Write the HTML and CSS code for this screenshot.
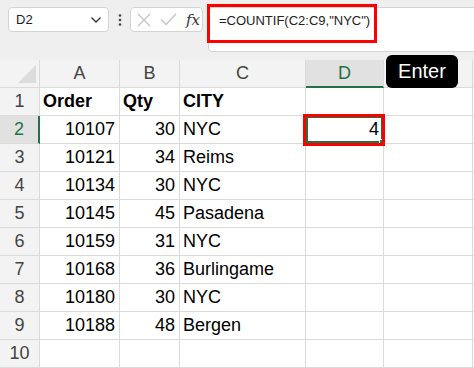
FILE: index.html
```html
<!DOCTYPE html>
<html lang="en">
<head>
  <meta charset="UTF-8">
  <title>COUNTIF</title>
  <link rel="stylesheet" href="styles.css">
</head>
<body>
  <div class="toolbar">
    <div class="namebox">
      <span>D2</span>
      <svg width="12" height="8" viewBox="0 0 12 8"><path d="M1.5 1.5 L6 6 L10.5 1.5" fill="none" stroke="#333" stroke-width="1.3"/></svg>
    </div>
    <div class="dots">
      <svg width="4" height="12" viewBox="0 0 4 12"><circle cx="2" cy="1.5" r="1.3" fill="#444"/><circle cx="2" cy="6" r="1.3" fill="#444"/><circle cx="2" cy="10.5" r="1.3" fill="#444"/></svg>
    </div>
    <div class="fxbox">
      <svg width="14" height="14" viewBox="0 0 14 14"><path d="M1 1 L13 13 M13 1 L1 13" stroke="#c4c4c4" stroke-width="1.3"/></svg>
      <svg width="17" height="13" viewBox="0 0 17 13"><path d="M1 6.5 L6 11.5 L16 1" fill="none" stroke="#c4c4c4" stroke-width="1.3"/></svg>
      <span class="fx">fx</span>
    </div>
    <div class="formula">=COUNTIF(C2:C9,"NYC")</div>
  </div>

  <div class="sheet">
    <div class="hd corner"><span class="tri"></span></div>
    <div class="hd">A</div>
    <div class="hd">B</div>
    <div class="hd">C</div>
    <div class="hd sel-col">D</div>
    <div class="hd"></div>
    <div class="hd last"></div>

    <div class="rh">1</div>
    <div class="c b">Order</div>
    <div class="c b">Qty</div>
    <div class="c b">CITY</div>
    <div class="c"></div><div class="c"></div><div class="c last"></div>

    <div class="rh sel-row">2</div>
    <div class="c n">10107</div><div class="c n">30</div><div class="c">NYC</div>
    <div class="c n active">4<span class="handle"></span></div><div class="c"></div><div class="c last"></div>

    <div class="rh">3</div>
    <div class="c n">10121</div><div class="c n">34</div><div class="c">Reims</div>
    <div class="c"></div><div class="c"></div><div class="c last"></div>

    <div class="rh">4</div>
    <div class="c n">10134</div><div class="c n">30</div><div class="c">NYC</div>
    <div class="c"></div><div class="c"></div><div class="c last"></div>

    <div class="rh">5</div>
    <div class="c n">10145</div><div class="c n">45</div><div class="c">Pasadena</div>
    <div class="c"></div><div class="c"></div><div class="c last"></div>

    <div class="rh">6</div>
    <div class="c n">10159</div><div class="c n">31</div><div class="c">NYC</div>
    <div class="c"></div><div class="c"></div><div class="c last"></div>

    <div class="rh">7</div>
    <div class="c n">10168</div><div class="c n">36</div><div class="c">Burlingame</div>
    <div class="c"></div><div class="c"></div><div class="c last"></div>

    <div class="rh">8</div>
    <div class="c n">10180</div><div class="c n">30</div><div class="c">NYC</div>
    <div class="c"></div><div class="c"></div><div class="c last"></div>

    <div class="rh">9</div>
    <div class="c n">10188</div><div class="c n">48</div><div class="c">Bergen</div>
    <div class="c"></div><div class="c"></div><div class="c last"></div>

    <div class="rh">10</div>
    <div class="c"></div><div class="c"></div><div class="c"></div>
    <div class="c"></div><div class="c"></div><div class="c last"></div>
  </div>

  <div class="mark mark-formula"></div>
  <div class="mark mark-cell"></div>
  <div class="badge">Enter</div>
</body>
</html>
```

FILE: styles.css
```css
body {
  margin: 0;
  background-color: #fff;
  font-family: "Liberation Sans", Arial, sans-serif;
  overflow: hidden;
  position: relative;
  height: 368px;
}

.toolbar {
  height: 60px;
  box-sizing: border-box;
  background-color: #efefef;
  display: flex;
  align-items: flex-start;
  padding: 7px 0 0 8px;
}

.namebox {
  width: 101px;
  height: 25px;
  box-sizing: border-box;
  background-color: #fff;
  border: 1px solid #d4d4d4;
  border-radius: 4px;
  display: flex;
  align-items: center;
  justify-content: space-between;
  padding: 0 6px 0 7px;
  font-size: 13px;
  color: #222;
}

.dots {
  width: 21px;
  height: 25px;
  display: flex;
  align-items: center;
  justify-content: center;
}

.fxbox {
  width: 73px;
  height: 25px;
  box-sizing: border-box;
  background-color: #fff;
  border: 1px solid #d4d4d4;
  border-radius: 4px;
  display: flex;
  align-items: center;
  gap: 9px;
  padding-left: 6px;
}

.fx {
  font-family: "DejaVu Serif", "Liberation Serif", serif;
  font-style: italic;
  font-size: 15px;
  color: #333;
}

.formula {
  flex: 1;
  height: 45px;
  margin-left: 5px;
  margin-right: -4px;
  box-sizing: border-box;
  background-color: #fff;
  border: 1px solid #d4d4d4;
  border-radius: 4px;
  padding: 5px 0 0 10px;
  font-size: 13px;
  line-height: 16px;
  color: #222;
}

.sheet {
  display: grid;
  grid-template-columns: 40px 80px 60px 126px 78px 89px 1fr;
  grid-auto-rows: 28px;
}

.sheet > div {
  box-sizing: border-box;
  border-right: 1px solid #dadada;
  border-bottom: 1px solid #dadada;
  display: flex;
  align-items: center;
  font-size: 18px;
  white-space: nowrap;
  overflow: hidden;
}

.sheet > .last {
  border-right: none;
}

.hd {
  background-color: #f3f3f3;
  justify-content: center;
  color: #444;
}

.corner {
  position: relative;
}

.tri {
  position: absolute;
  right: 3px;
  bottom: 4px;
  width: 0;
  height: 0;
  border-left: 18px solid transparent;
  border-bottom: 18px solid #dcdcdc;
}

.hd.sel-col {
  background-color: #e1e1e1;
  color: #217346;
  border-bottom: 2px solid #217346;
}

.rh {
  background-color: #f3f3f3;
  justify-content: center;
  color: #444;
}

.rh.sel-row {
  background-color: #e1e1e1;
  color: #217346;
  border-right: 2px solid #217346;
}

.c {
  padding: 0 3px;
  color: #000;
}

.c.n {
  justify-content: flex-end;
  padding-right: 4px;
}

.c.b {
  font-weight: bold;
}

.c.active {
  position: relative;
  overflow: visible;
  box-shadow: inset 0 0 0 2px #217346;
}

.handle {
  position: absolute;
  right: -3px;
  bottom: -3px;
  width: 5px;
  height: 5px;
  background-color: #217346;
  border: 1px solid #fff;
}

.mark {
  position: absolute;
  border: 3px solid #f00;
  box-sizing: border-box;
}

.mark-formula {
  left: 207px;
  top: 4px;
  width: 170px;
  height: 39px;
}

.mark-cell {
  left: 303px;
  top: 114px;
  width: 82px;
  height: 32px;
}

.badge {
  position: absolute;
  left: 386px;
  top: 55px;
  width: 72px;
  height: 33px;
  box-sizing: border-box;
  background-color: #000;
  color: #fff;
  border-radius: 6px;
  display: flex;
  align-items: center;
  justify-content: center;
  font-size: 20px;
}
```
